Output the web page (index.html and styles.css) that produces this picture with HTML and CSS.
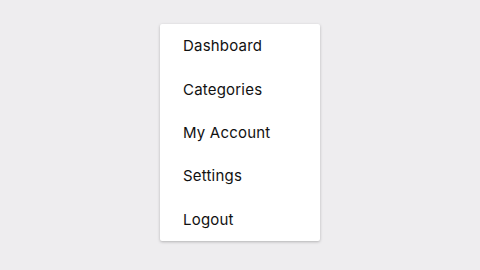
FILE: index.html
```html
<!DOCTYPE html>
<html lang="en">
<head>
    <meta charset="UTF-8">
    <meta name="viewport" content="width=device-width, initial-scale=1.0">
    <title>Menu</title>
    <link rel="stylesheet" href="styles.css">
</head>
<body>
    <nav class="menu">
        <a href="#" class="menu-item">Dashboard</a>
        <a href="#" class="menu-item">Categories</a>
        <a href="#" class="menu-item">My Account</a>
        <a href="#" class="menu-item">Settings</a>
        <a href="#" class="menu-item">Logout</a>
    </nav>
</body>
</html>
```

FILE: styles.css
```css
body {
    font-family: Inter, "Open Sans", sans-serif;
    background: #eeedef;
    margin: 0;
    height: 270px;
    display: flex;
    justify-content: center;
    align-items: flex-start;
}

.menu {
    margin-top: 24px;
    width: 160px;
    height: 217px;
    background: #fff;
    border-radius: 2px;
    box-shadow: 0 1px 3px rgba(0, 0, 0, 0.25);
    display: flex;
    flex-direction: column;
}

.menu-item {
    flex: 1;
    display: flex;
    align-items: center;
    padding-left: 23px;
    font-size: 15px;
    color: #111;
    text-decoration: none;
    letter-spacing: 0.2px;
}
```
